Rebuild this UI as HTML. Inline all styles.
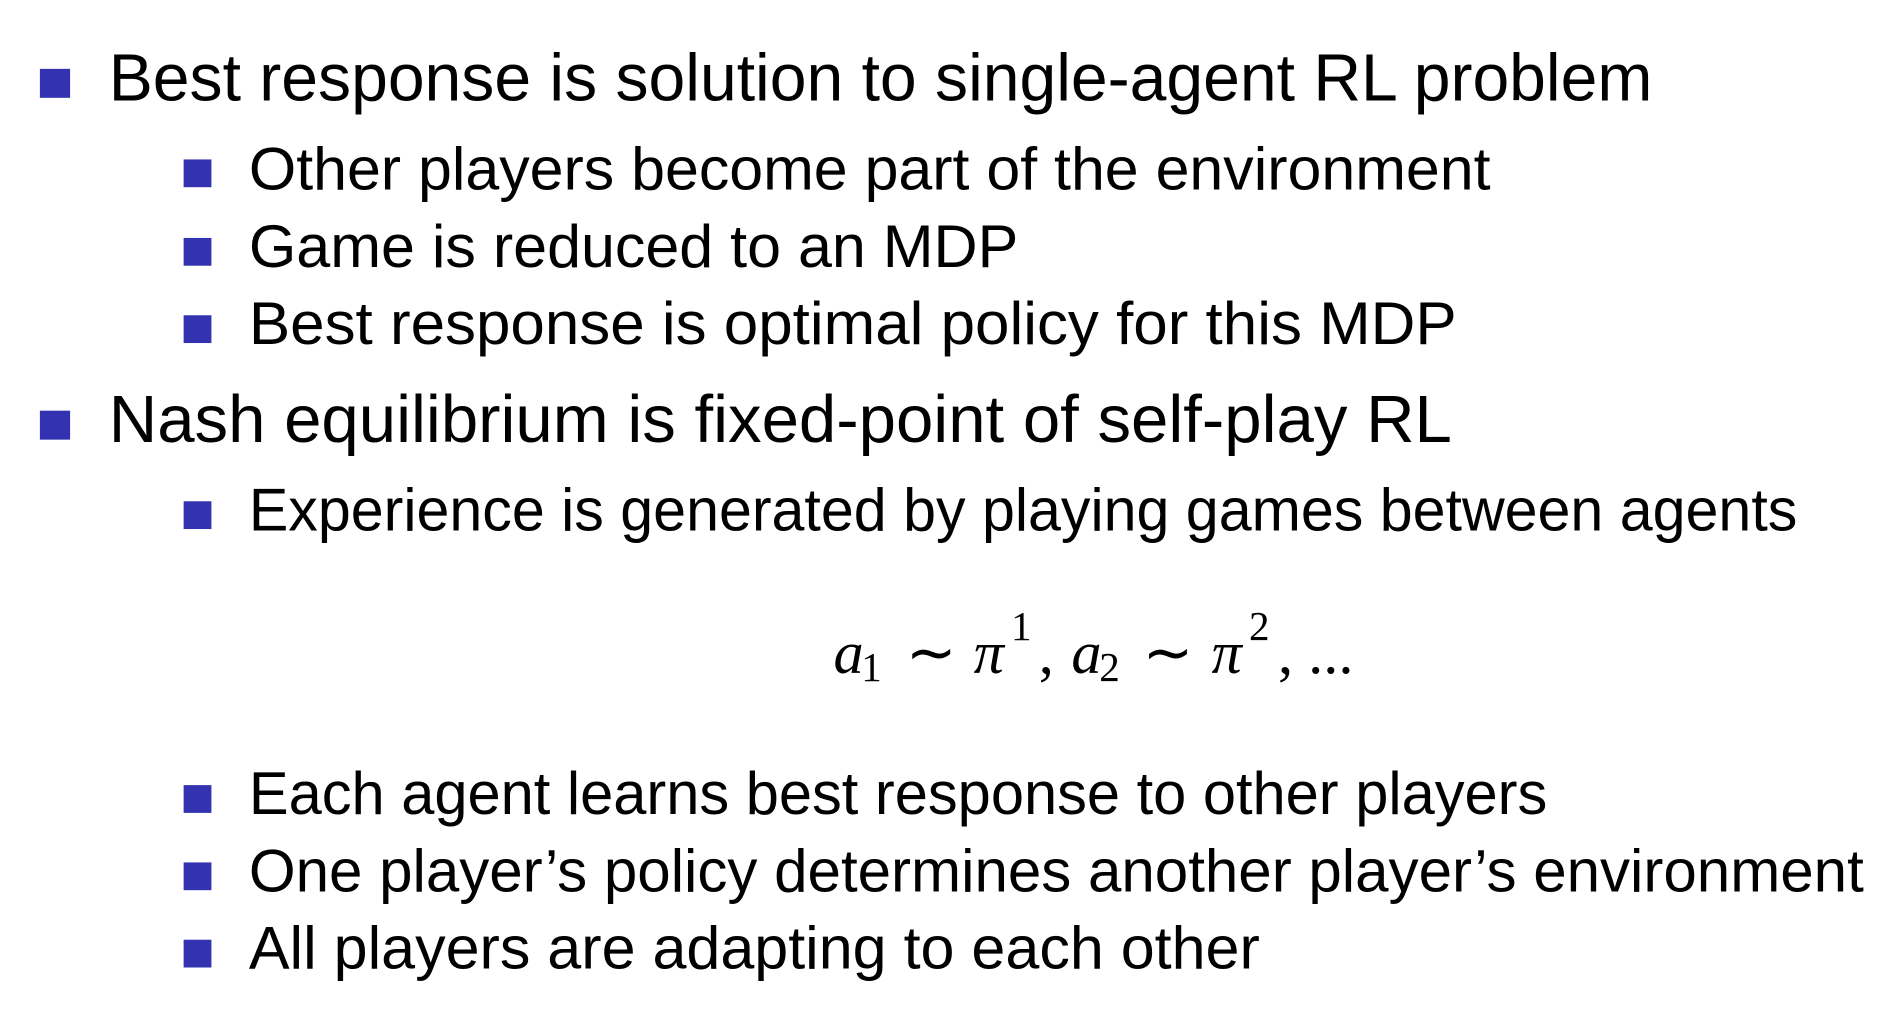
<!DOCTYPE html>
<html><head><style>
html,body{margin:0;padding:0;background:#fff;width:1894px;height:1032px;overflow:hidden}
svg{display:block}
text{font-family:"Liberation Sans",sans-serif;fill:#000}
.m{font-family:"Liberation Serif",serif;font-style:italic}
.r{font-family:"Liberation Serif",serif}
</style></head><body>
<svg width="1894" height="1032" viewBox="0 0 1568 854.4" xmlns="http://www.w3.org/2000/svg">
<g fill="#3333b2">
<rect x="33" y="57" width="25" height="24"/>
<rect x="152" y="132" width="23" height="23"/>
<rect x="152" y="197" width="23" height="23"/>
<rect x="152" y="261" width="23" height="23"/>
<rect x="33" y="340" width="25" height="24"/>
<rect x="152" y="415" width="23" height="23"/>
<rect x="152" y="650" width="23" height="23"/>
<rect x="152" y="714" width="23" height="23"/>
<rect x="152" y="778" width="23" height="23"/>
</g>
<text x="90" y="83" font-size="55" textLength="1278" lengthAdjust="spacingAndGlyphs">Best response is solution to single-agent RL problem</text>
<text x="206" y="157" font-size="50" textLength="1028" lengthAdjust="spacingAndGlyphs">Other players become part of the environment</text>
<text x="206" y="221" font-size="50" textLength="637" lengthAdjust="spacingAndGlyphs">Game is reduced to an MDP</text>
<text x="206" y="285" font-size="50" textLength="1000" lengthAdjust="spacingAndGlyphs">Best response is optimal policy for this MDP</text>
<text x="90" y="366" font-size="55" textLength="1112" lengthAdjust="spacingAndGlyphs">Nash equilibrium is fixed-point of self-play RL</text>
<text x="206" y="439" font-size="50" textLength="1282" lengthAdjust="spacingAndGlyphs">Experience is generated by playing games between agents</text>
<text x="690" y="557" font-size="50" class="m">a</text>
<text x="713" y="564" font-size="34" class="r">1</text>
<text x="750" y="557" font-size="50" class="r">∼</text>
<text x="806" y="557" font-size="50" class="m">π</text>
<text x="837" y="530" font-size="34" class="r">1</text>
<text x="860" y="557" font-size="50" class="r">,</text>
<text x="887" y="557" font-size="50" class="m">a</text>
<text x="910" y="564" font-size="34" class="r">2</text>
<text x="946" y="557" font-size="50" class="r">∼</text>
<text x="1003" y="557" font-size="50" class="m">π</text>
<text x="1034" y="530" font-size="34" class="r">2</text>
<text x="1058" y="557" font-size="50" class="r">, ...</text>
<text x="206" y="674" font-size="50" textLength="1075" lengthAdjust="spacingAndGlyphs">Each agent learns best response to other players</text>
<text x="206" y="738" font-size="50" textLength="1337" lengthAdjust="spacingAndGlyphs">One player’s policy determines another player’s environment</text>
<text x="206" y="802" font-size="50" textLength="837" lengthAdjust="spacingAndGlyphs">All players are adapting to each other</text>
</svg>
</body></html>
